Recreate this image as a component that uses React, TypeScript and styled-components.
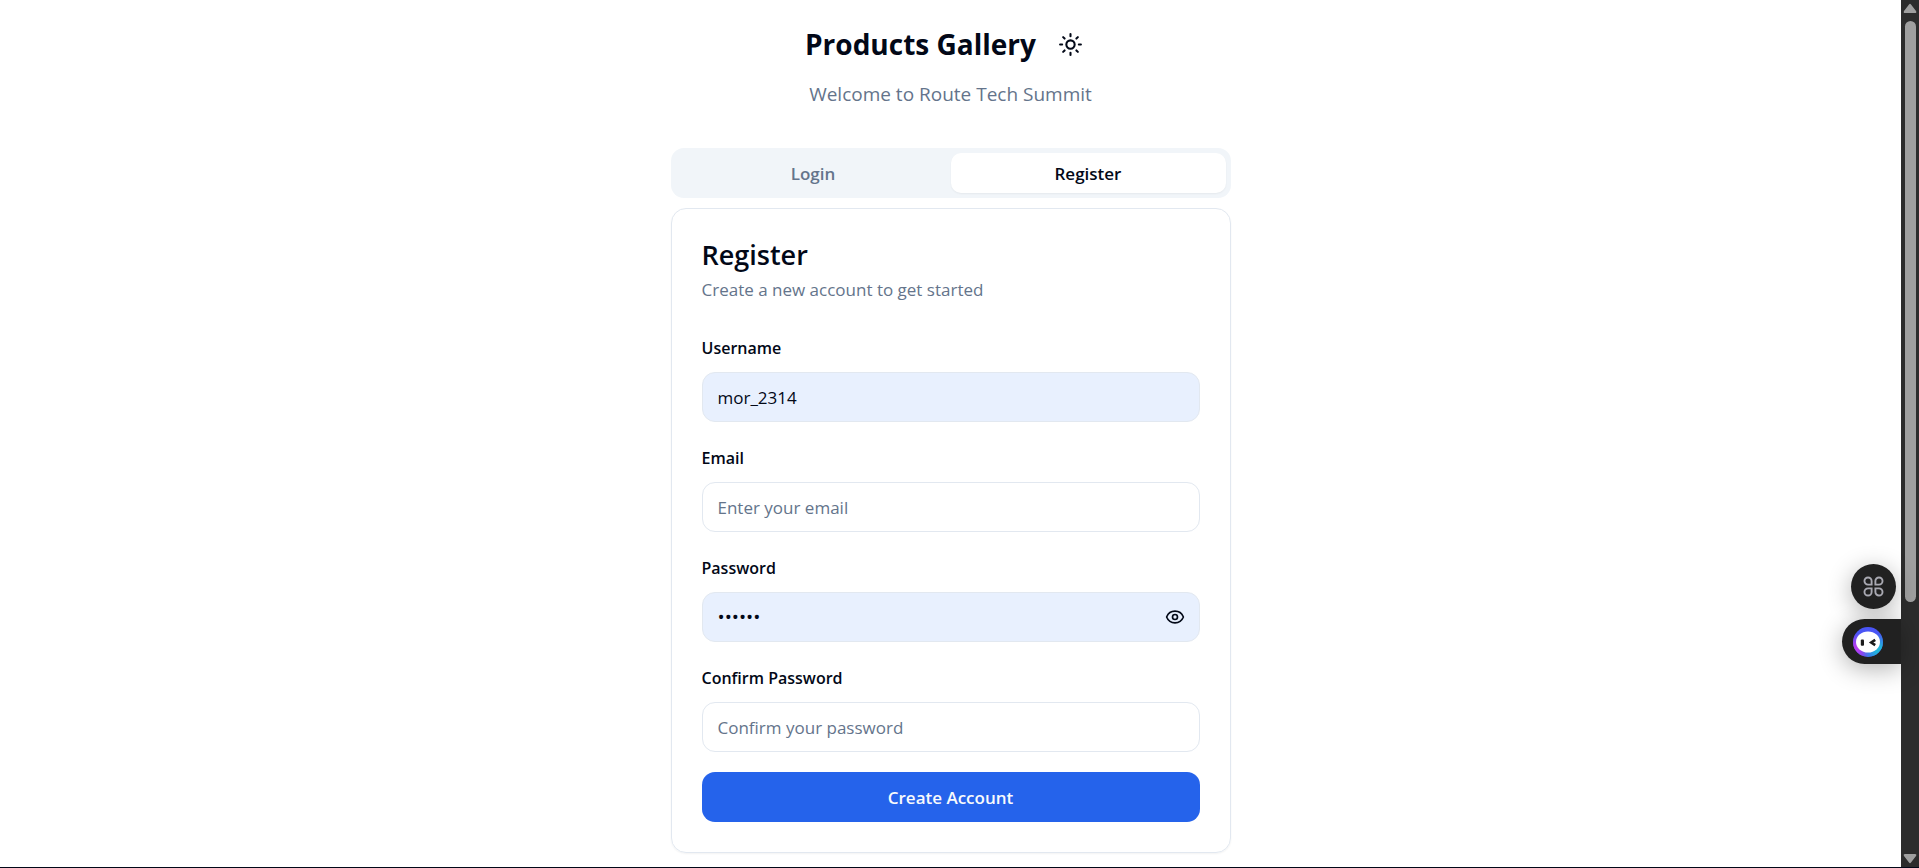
import React, { useState } from "react";
import styled, { createGlobalStyle } from "styled-components";
import { Eye, Sun } from "lucide-react";

const GlobalStyle = createGlobalStyle`
  *, *::before, *::after { box-sizing: border-box; }
  html, body, #root { height: 100%; }
  body {
    margin: 0;
    background: #ffffff;
    color: #020817;
    font-family: "Segoe UI", "Open Sans", "Noto Sans", sans-serif;
    overflow: hidden;
  }
  h1, h2, p { margin: 0; }
  button, input { font: inherit; color: inherit; }
  button { cursor: pointer; }
`;

const Shell = styled.div`
  display: flex;
  height: 100%;
  border-bottom: 1px solid #020817;
`;

const Page = styled.main`
  flex: 1;
  display: flex;
  flex-direction: column;
  align-items: center;
  padding: 19px 20px 0;
`;

const Header = styled.header`
  display: flex;
  flex-direction: column;
  align-items: center;
  gap: 10px;
  margin-bottom: 39px;
`;

const Brand = styled.div`
  display: flex;
  align-items: center;
  gap: 10px;
`;

const BrandTitle = styled.h1`
  font-size: 28px;
  line-height: 50px;
  font-weight: 700;
`;

const Tagline = styled.p`
  font-size: 19px;
  line-height: 30px;
  color: #64748b;
`;

const IconButton = styled.button<{ $size: number }>`
  display: grid;
  place-items: center;
  width: ${(p) => p.$size}px;
  height: ${(p) => p.$size}px;
  padding: 0;
  border: 0;
  background: none;
`;

const AuthPanel = styled.section`
  width: 100%;
  max-width: 560px;
  display: flex;
  flex-direction: column;
  gap: 10px;
`;

const Tabs = styled.div`
  display: grid;
  grid-template-columns: 1fr 1fr;
  padding: 5px;
  border-radius: 13px;
  background: #f1f5f9;
`;

const Tab = styled.button<{ $active: boolean }>`
  height: 40px;
  padding: 0;
  border: 0;
  border-radius: 10px;
  font-size: 17px;
  font-weight: 600;
  color: ${(p) => (p.$active ? "#020817" : "#64748b")};
  background: ${(p) => (p.$active ? "#ffffff" : "transparent")};
  box-shadow: ${(p) => (p.$active ? "0 1px 2px rgba(0, 0, 0, 0.05)" : "none")};
`;

const Card = styled.form`
  display: flex;
  flex-direction: column;
  gap: 30px;
  padding: 30px;
  border: 1px solid #e2e8f0;
  border-radius: 15px;
  box-shadow: 0 1px 2px rgba(0, 0, 0, 0.05);
`;

const CardHeader = styled.div`
  display: flex;
  flex-direction: column;
  gap: 6px;
`;

const CardTitle = styled.h2`
  font-size: 27px;
  line-height: 32px;
  font-weight: 600;
`;

const CardText = styled.p`
  font-size: 17px;
  line-height: 25px;
  color: #64748b;
`;

const Fields = styled.div`
  display: flex;
  flex-direction: column;
  gap: 20px;
`;

const Field = styled.div`
  display: flex;
  flex-direction: column;
  gap: 8px;
`;

const Label = styled.label`
  font-size: 16px;
  line-height: 32px;
  font-weight: 600;
`;

const InputBox = styled.div<{ $filled: boolean }>`
  display: flex;
  align-items: center;
  height: 50px;
  padding-right: 10px;
  border: 1px solid #e2e8f0;
  border-radius: 13px;
  background: ${(p) => (p.$filled ? "#e8f0fe" : "#ffffff")};
`;

const Input = styled.input`
  flex: 1;
  min-width: 0;
  height: 48px;
  padding: 0 15px;
  border: 0;
  outline: 0;
  background: none;
  font-size: 17px;
  &::placeholder { color: #64748b; opacity: 1; }
  &[type="password"]:not(:placeholder-shown) { font-size: 19px; }
`;

const Submit = styled.button`
  height: 50px;
  border: 0;
  border-radius: 13px;
  background: #2563eb;
  color: #f8fafc;
  font-size: 17px;
  font-weight: 600;
`;

const ScrollTrack = styled.div`
  display: flex;
  flex-direction: column;
  align-items: center;
  width: 18px;
  background: #2c2c2c;
`;

const ScrollArrow = styled.svg`
  width: 14px;
  height: 11px;
  margin: 3px 0;
  fill: #9f9f9f;
`;

const ScrollRail = styled.div`
  flex: 1;
  padding: 4px 0;
`;

const ScrollThumb = styled.div`
  width: 11px;
  height: 70.4%;
  border-radius: 6px;
  background: #9f9f9f;
`;

const Dock = styled.aside`
  position: fixed;
  right: 18px;
  top: 564px;
  display: flex;
  flex-direction: column;
  align-items: flex-end;
  gap: 10px;
`;

const DockRound = styled.button`
  display: grid;
  place-items: center;
  width: 45px;
  height: 45px;
  margin-right: 5px;
  padding: 0;
  border: 0;
  border-radius: 50%;
  background: #212121;
  box-shadow: 0 5px 25px rgba(0, 0, 0, 0.3);
`;

const DockPill = styled.button`
  display: flex;
  align-items: center;
  width: 59px;
  height: 45px;
  padding: 0 0 0 11px;
  border: 0;
  border-radius: 23px 0 0 23px;
  background: #212121;
  box-shadow: 0 5px 25px rgba(0, 0, 0, 0.3);
`;

function CloverIcon() {
  return (
    <svg width="21" height="21" viewBox="0 0 20 20" fill="none" stroke="#a9a9b2" strokeWidth="1.8">
      <path d="M8.2 8.2H4.8A3.4 3.4 0 1 1 8.2 4.8z" />
      <path d="M11.8 8.2H15.2A3.4 3.4 0 1 0 11.8 4.8z" />
      <path d="M8.2 11.8H4.8A3.4 3.4 0 1 0 8.2 15.2z" />
      <path d="M11.8 11.8H15.2A3.4 3.4 0 1 1 11.8 15.2z" />
    </svg>
  );
}

function BotIcon() {
  return (
    <svg width="30" height="30" viewBox="0 0 30 30">
      <defs>
        <radialGradient id="ringViolet" cx="0.05" cy="0.75" r="0.55">
          <stop offset="0.2" stopColor="#b63cf0" />
          <stop offset="1" stopColor="#b63cf0" stopOpacity="0" />
        </radialGradient>
        <radialGradient id="ringCyan" cx="0.9" cy="0.8" r="0.6">
          <stop offset="0.2" stopColor="#1fb6dc" />
          <stop offset="1" stopColor="#1fb6dc" stopOpacity="0" />
        </radialGradient>
      </defs>
      <circle cx="15" cy="15" r="15" fill="#4a55f5" />
      <circle cx="15" cy="15" r="15" fill="url(#ringViolet)" />
      <circle cx="15" cy="15" r="15" fill="url(#ringCyan)" />
      <ellipse cx="15" cy="15" rx="12" ry="10.5" fill="#fff" />
      <rect x="7.8" y="12.4" width="3.2" height="6.4" rx="1" fill="#1b1b1b" />
      <path d="M22.2 12.8l-4 2.7 4 2.7" fill="none" stroke="#1b1b1b" strokeWidth="2.6" />
    </svg>
  );
}

const fields = [
  { id: "username", label: "Username", type: "text", placeholder: "Enter your username", value: "mor_2314" },
  { id: "email", label: "Email", type: "email", placeholder: "Enter your email", value: "" },
  { id: "password", label: "Password", type: "password", placeholder: "Enter your password", value: "secret" },
  { id: "confirm", label: "Confirm Password", type: "password", placeholder: "Confirm your password", value: "" },
];

export default function App() {
  const [shown, setShown] = useState(false);
  return (
    <>
      <GlobalStyle />
      <Shell>
        <Page>
          <Header>
            <Brand>
              <BrandTitle>Products Gallery</BrandTitle>
              <IconButton $size={50} type="button" aria-label="Toggle theme">
                <Sun size={25} />
              </IconButton>
            </Brand>
            <Tagline>Welcome to Route Tech Summit</Tagline>
          </Header>
          <AuthPanel>
            <Tabs role="tablist">
              <Tab $active={false} role="tab" type="button" aria-selected={false}>Login</Tab>
              <Tab $active role="tab" type="button" aria-selected>Register</Tab>
            </Tabs>
            <Card onSubmit={(e) => e.preventDefault()}>
              <CardHeader>
                <CardTitle>Register</CardTitle>
                <CardText>Create a new account to get started</CardText>
              </CardHeader>
              <Fields>
                {fields.map((f) => (
                  <Field key={f.id}>
                    <Label htmlFor={f.id}>{f.label}</Label>
                    <InputBox $filled={f.value !== ""}>
                      <Input
                        id={f.id}
                        type={f.id === "password" && shown ? "text" : f.type}
                        placeholder={f.placeholder}
                        defaultValue={f.value}
                      />
                      {f.id === "password" && (
                        <IconButton $size={28} type="button" aria-label="Show password" onClick={() => setShown(!shown)}>
                          <Eye size={20} />
                        </IconButton>
                      )}
                    </InputBox>
                  </Field>
                ))}
                <Submit type="submit">Create Account</Submit>
              </Fields>
            </Card>
          </AuthPanel>
        </Page>
        <ScrollTrack aria-hidden="true">
          <ScrollArrow viewBox="0 0 14 11"><path d="M6 1.5Q7 0 8 1.5L13 8Q14 10 12 10H2Q0 10 1 8z" /></ScrollArrow>
          <ScrollRail><ScrollThumb /></ScrollRail>
          <ScrollArrow viewBox="0 0 14 11"><path d="M6 9.5Q7 11 8 9.5L13 3Q14 1 12 1H2Q0 1 1 3z" /></ScrollArrow>
        </ScrollTrack>
      </Shell>
      <Dock>
        <DockRound type="button" aria-label="Apps"><CloverIcon /></DockRound>
        <DockPill type="button" aria-label="Assistant"><BotIcon /></DockPill>
      </Dock>
    </>
  );
}
